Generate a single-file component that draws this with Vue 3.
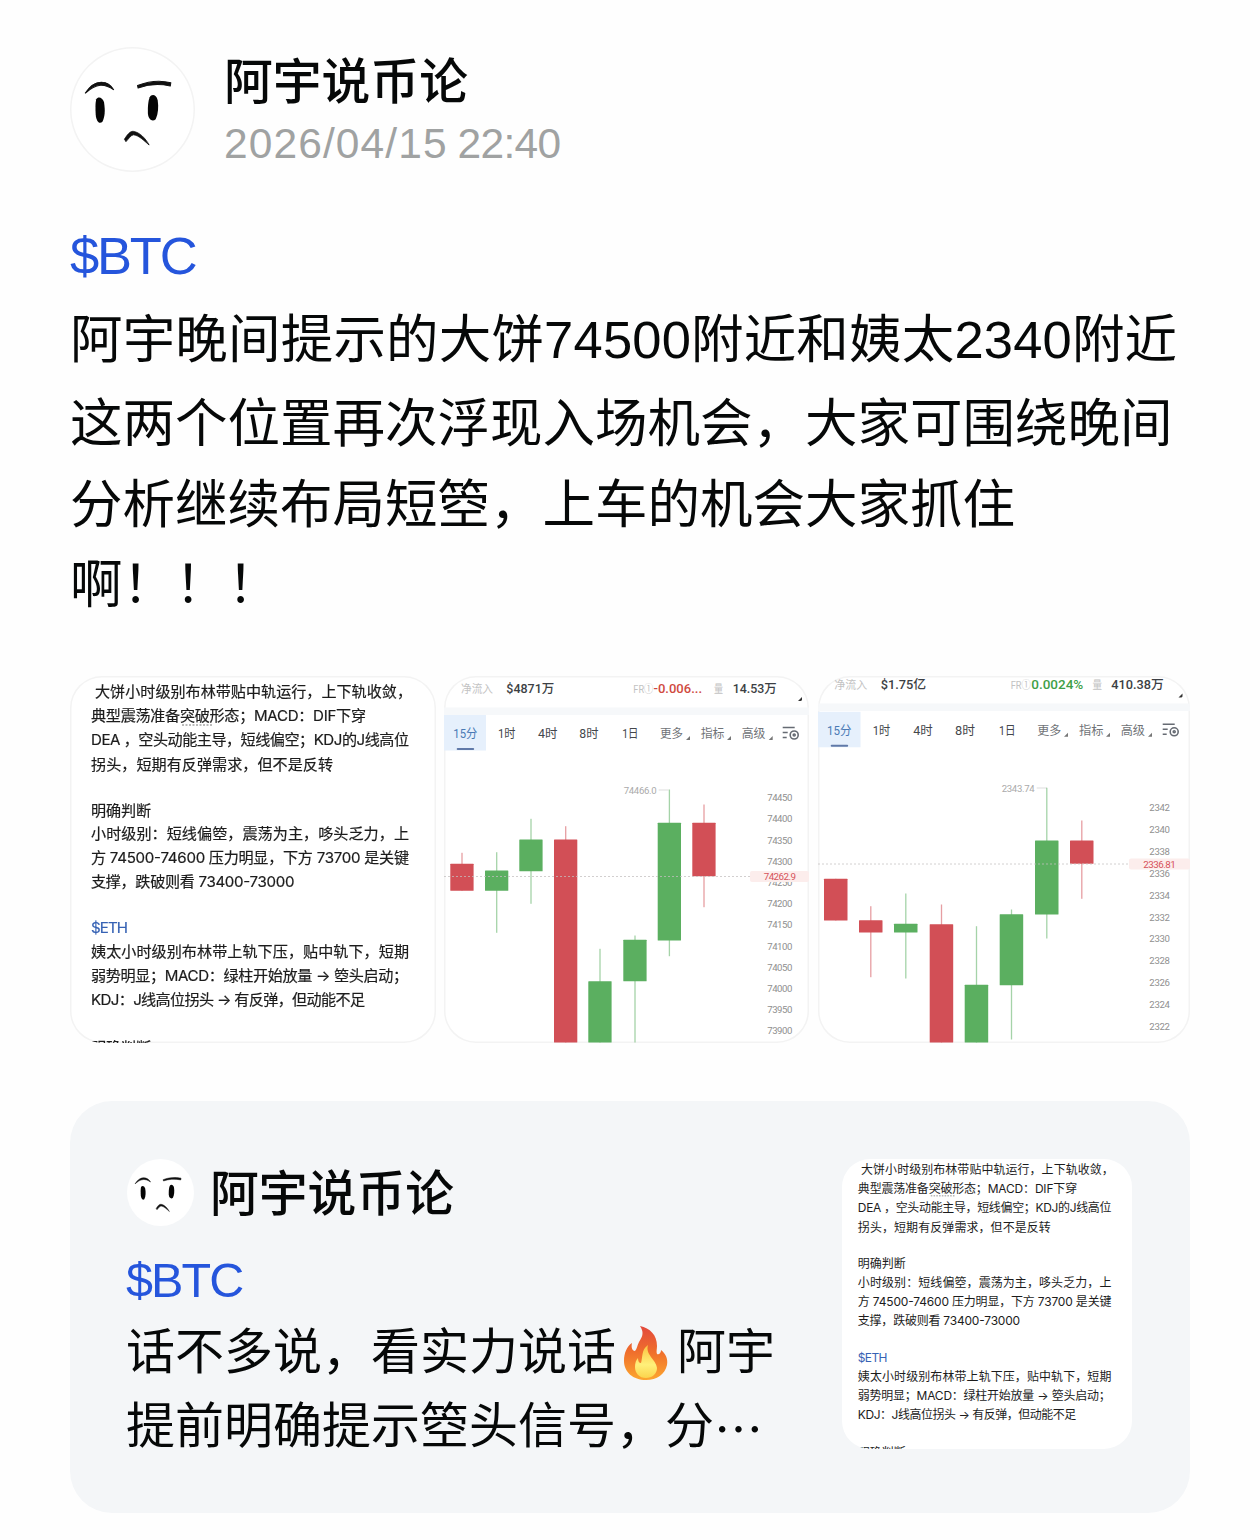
<script setup>
const postLines = [
  '阿宇晚间提示的大饼74500附近和姨太2340附近',
  '这两个位置再次浮现入场机会，大家可围绕晚间',
  '分析继续布局短箜，上车的机会大家抓住',
  '啊！！！'
]

// x, y: text centre line, w: drawn length
const noteLines = [
  { x: 25, y: 15.5, w: 317, text: '大饼小时级别布林带贴中轨运行，上下轨收敛，' },
  { x: 21, y: 39.5, w: 275, text: '典型震荡准备突破形态；MACD：DIF下穿' },
  { x: 21, y: 63.7, w: 318, text: 'DEA ，空头动能主导，短线偏空；KDJ的J线高位' },
  { x: 21, y: 88, w: 242, text: '拐头，短期有反弹需求，但不是反转' },
  { x: 21, y: 134, w: 60, text: '明确判断' },
  { x: 21, y: 157.5, w: 318, text: '小时级别：短线偏箜，震荡为主，哆头乏力，上' },
  { x: 21, y: 181.3, w: 318, text: '方 74500-74600 压力明显，下方 73700 是关键' },
  { x: 21, y: 205.3, w: 203.5, text: '支撑，跌破则看 73400-73000' },
  { x: 21, y: 251.5, w: 37, text: '$ETH', link: true },
  { x: 21, y: 275.5, w: 318, text: '姨太小时级别布林带上轨下压，贴中轨下，短期' },
  { x: 21, y: 299.5, w: 317, text: '弱势明显；MACD：绿柱开始放量 → 箜头启动；' },
  { x: 21, y: 323.5, w: 274, text: 'KDJ：J线高位拐头 → 有反弹，但动能不足' },
  { x: 21, y: 371.5, w: 60, text: '明确判断' }
]

const charts = [
  {
    id: 'btc',
    width: 365,
    headY: 11.3,
    stats: [
      { x: 17, w: 32, text: '净流入', type: 'muted' },
      { x: 62.3, w: 48, text: '$4871万', type: 'strong' },
      { x: 189.3, w: 20, text: 'FR①', type: 'muted' },
      { x: 209.5, w: 48.5, text: '-0.006...', type: 'loss' },
      { x: 270, w: 9, text: '量', type: 'muted' },
      { x: 288.7, w: 44, text: '14.53万', type: 'strong' }
    ],
    corner: [354, 24.5],
    bandY: 31,
    tabY: 38.5,
    tabW: 42,
    tabs: [
      { x: 9.3, w: 24, text: '15分', active: true },
      { x: 54, w: 17.5, text: '1时' },
      { x: 94, w: 19.5, text: '4时' },
      { x: 135.3, w: 19.2, text: '8时' },
      { x: 178.3, w: 16.2, text: '1日' },
      { x: 216, w: 23, text: '更多', more: 242 },
      { x: 256.7, w: 23.8, text: '指标', more: 283 },
      { x: 297.7, w: 23.8, text: '高级', more: 324.7 }
    ],
    iconX: 338.7,
    high: { x: 179.7, w: 33, y: 114, text: '74466.0', to: 224.5 },
    axis: { x: 323.3, w: 25, y: 121, step: 21.2, from: 74450, by: -50, count: 12 },
    price: { x: 319.7, w: 32.3, y: 200, text: '74262.9', pill: 306 },
    candleW: 23.3,
    candles: [
      { x: 6.3, top: 187.3, bottom: 214.3, high: 176.3, low: 214.3, up: false },
      { x: 41, top: 194, bottom: 214.3, high: 175.7, low: 256.3, up: true },
      { x: 75.3, top: 163, bottom: 194.7, high: 142.3, low: 227.3, up: true },
      { x: 110, top: 163, bottom: 366, high: 149.7, low: 366, up: false },
      { x: 144.3, top: 304.7, bottom: 366, high: 272.3, low: 366, up: true },
      { x: 179.3, top: 263.3, bottom: 304.7, high: 259, low: 366, up: true },
      { x: 213.7, top: 146.3, bottom: 264, high: 113, low: 279.7, up: true },
      { x: 248.3, top: 146.3, bottom: 199.7, high: 128, low: 230.7, up: false }
    ]
  },
  {
    id: 'eth',
    width: 372,
    headY: 7.3,
    stats: [
      { x: 16.3, w: 33, text: '净流入', type: 'muted' },
      { x: 62.7, w: 45.5, text: '$1.75亿', type: 'strong' },
      { x: 192.7, w: 20, text: 'FR①', type: 'muted' },
      { x: 213.3, w: 52, text: '0.0024%', type: 'gain' },
      { x: 274.5, w: 9.5, text: '量', type: 'muted' },
      { x: 293.3, w: 52.5, text: '410.38万', type: 'strong' }
    ],
    corner: [360.5, 21],
    bandY: 27,
    tabY: 35.3,
    tabW: 42.5,
    tabs: [
      { x: 9, w: 24.5, text: '15分', active: true },
      { x: 54.7, w: 17.5, text: '1时' },
      { x: 95.3, w: 19.5, text: '4时' },
      { x: 137, w: 20, text: '8时' },
      { x: 181, w: 16.5, text: '1日' },
      { x: 219.3, w: 24, text: '更多', more: 246 },
      { x: 261, w: 24.5, text: '指标', more: 288 },
      { x: 302.7, w: 24.3, text: '高级', more: 330 }
    ],
    iconX: 344.7,
    high: { x: 183.7, w: 33, y: 112, text: '2343.74', to: 229 },
    axis: { x: 331.3, w: 20.7, y: 131.3, step: 21.83, from: 2342, by: -2, count: 11 },
    price: { x: 325.3, w: 32.4, y: 187.5, text: '2336.81', pill: 311 },
    candleW: 23.5,
    candles: [
      { x: 6, top: 202.3, bottom: 244, high: 202.3, low: 244, up: false },
      { x: 41, top: 243.7, bottom: 256, high: 229.7, low: 300.7, up: false },
      { x: 76, top: 247.3, bottom: 256, high: 217, low: 302, up: true },
      { x: 111.7, top: 247.7, bottom: 366, high: 228, low: 366, up: false },
      { x: 146.7, top: 308.3, bottom: 366, high: 249.7, low: 366, up: true },
      { x: 181.7, top: 237.7, bottom: 308.7, high: 233, low: 363, up: true },
      { x: 217, top: 164, bottom: 238, high: 111.3, low: 262, up: true },
      { x: 252, top: 164, bottom: 187.3, high: 144, low: 222.3, up: false }
    ]
  }
]
</script>

<template>
  <main class="post" lang="zh-CN">
    <svg class="defs" width="0" height="0" aria-hidden="true">
      <symbol id="face" viewBox="0 0 124 124">
        <g transform="matrix(1 0 0 .968 0 -.5)">
          <path d="M15 48C20 40 25 36.500 31 36.500C37 36.500 41 40 43.500 44.500C38 40.500 34 39.500 30 39.800C24 40.300 20 43.500 15 48Z" fill="#111" stroke="#111" stroke-width="1" />
          <path d="M67 40C77 36 90 34.500 100 37.200L99.500 40.500C89 38 77 39 67.500 42.500Z" fill="#111" stroke="#111" stroke-width="1" />
          <path d="M26 54C28 51 32 52 33.700 57C35 65 34.800 72 32 77.500C28.500 80 26 76 25.500 70C25.200 64 25 58 26 54Z" fill="#050505" />
          <path d="M79 52C81 48.500 85.500 49 87 55C88 62 87.500 69 85 74.500C82 77.500 78 75.500 77.300 69C77 62 77.500 56 79 52Z" fill="#050505" />
          <path d="M54 95C57 90 60 86.500 63 87C69 88 75 94 78.500 101C73 96 68 91 63 90.500C60 91 58 95 55.500 97.500Z" fill="#111" stroke="#111" stroke-width=".8" />
        </g>
      </symbol>
    </svg>

    <header class="author">
      <svg class="avatar"><use href="#face" /></svg>
      <div class="author-info">
        <h1 class="name">阿宇说币论</h1>
        <time class="date"><span class="day">2026/04/15</span> <span class="clock">22:40</span></time>
      </div>
    </header>

    <section class="content">
      <a class="ticker">$BTC</a>
      <p v-for="line in postLines" :key="line" class="post-line">{{ line }}</p>
    </section>

    <section class="gallery">
      <div class="shot note-shot">
        <svg class="note" viewBox="0 0 366 366">
          <text
            v-for="(line, i) in noteLines"
            :key="i"
            :x="line.x"
            :y="line.y + 5"
            :textLength="line.w"
            :class="{ link: line.link }"
          >{{ line.text }}</text>
          <path d="M112 48.500H142" stroke="#777" stroke-dasharray="2 1.500" />
        </svg>
      </div>

      <div v-for="chart in charts" :key="chart.id" class="shot" :class="chart.id">
        <svg class="chart" :viewBox="`0 0 ${chart.width} 366`">
          <text
            v-for="stat in chart.stats"
            :key="stat.text"
            :x="stat.x"
            :y="chart.headY + 5"
            :textLength="stat.w"
            lengthAdjust="spacingAndGlyphs"
            :class="['stat', stat.type]"
          >{{ stat.text }}</text>
          <path :d="`M${chart.corner[0]} ${chart.corner[1]}l4 -4v3l-1 1z`" fill="#333" />

          <rect x="0" :y="chart.bandY" :width="chart.width" height="7.500" fill="#f6f8fa" />
          <rect x="0" :y="chart.tabY" :width="chart.tabW" height="35.500" fill="#e6f0fc" />
          <rect x="12.700" :y="chart.tabY + 33" width="17.500" height="2" rx="1" fill="#6079a8" />
          <template v-for="tab in chart.tabs" :key="tab.text">
            <text
              :x="tab.x"
              :y="chart.tabY + 23.3"
              :textLength="tab.w"
              lengthAdjust="spacingAndGlyphs"
              :class="['tab', { active: tab.active, menu: tab.more }]"
            >{{ tab.text }}</text>
            <path v-if="tab.more" :d="`M${tab.more} ${chart.tabY + 25}l4 -4v4z`" fill="#777" />
          </template>
          <g :transform="`translate(${chart.iconX} ${chart.tabY + 11.5})`" fill="none" stroke="#666b73" stroke-width="1.600">
            <path d="M0 1H12M0 6H5M0 11H4" />
            <circle cx="11.500" cy="8.500" r="4" />
            <circle cx="11.500" cy="8.500" r="1" />
          </g>

          <text :x="chart.high.x" :y="chart.high.y + 3.6" :textLength="chart.high.w" class="high">{{ chart.high.text }}</text>
          <path :d="`M${chart.high.x + chart.high.w + 2} ${chart.high.y - 0.5}H${chart.high.to}`" stroke="#ddd" />

          <g v-for="(candle, i) in chart.candles" :key="i" :class="candle.up ? 'up' : 'down'">
            <rect class="wick" :x="candle.x + chart.candleW / 2 - 0.6" :y="candle.high" width="1.300" :height="candle.low - candle.high" />
            <rect :x="candle.x" :y="candle.top" :width="chart.candleW" :height="candle.bottom - candle.top" rx=".5" />
          </g>
          <path :d="`M0 ${chart.price.y}H${chart.price.pill}`" stroke="#c4c0c0" stroke-dasharray="2 2" opacity=".75" />

          <text
            v-for="n in chart.axis.count"
            :key="n"
            :x="chart.axis.x"
            :y="chart.axis.y + (n - 1) * chart.axis.step + 3.6"
            :textLength="chart.axis.w"
            class="axis"
          >{{ chart.axis.from + (n - 1) * chart.axis.by }}</text>
          <rect :x="chart.price.pill" :y="chart.price.y - 5.5" :width="chart.width - chart.price.pill" height="11" rx="2" fill="#fcedec" />
          <text :x="chart.price.x" :y="chart.price.y + 3.8" :textLength="chart.price.w" class="price">{{ chart.price.text }}</text>
        </svg>
      </div>
    </section>

    <section class="quote">
      <div class="quote-body">
        <div class="quote-author">
          <svg class="avatar small"><use href="#face" /></svg>
          <h2 class="name">阿宇说币论</h2>
        </div>
        <a class="ticker">$BTC</a>
        <p class="quote-line">
          <span>话不多说，看实力说话</span>
          <svg class="fire" viewBox="0 0 44 54">
            <defs>
              <linearGradient id="flame" x1="0" y1="0" x2="0" y2="1">
                <stop offset="0" stop-color="#e2483c" />
                <stop offset=".5" stop-color="#f0702c" />
                <stop offset="1" stop-color="#fca62f" />
              </linearGradient>
              <linearGradient id="core" x1="0" y1="0" x2="0" y2="1">
                <stop offset="0" stop-color="#fbc240" />
                <stop offset=".6" stop-color="#fff07a" />
                <stop offset="1" stop-color="#fbd44c" />
              </linearGradient>
            </defs>
            <path d="M16 0C26 2 33 9 33 20C33 23 32 26 33 28C35 29 37 27 37 24C42 28 44 33 43 39C41 48 33 54 22 54C9 54 0 46 0 35C0 27 3 20 8 17C7 21 8 25 11 25C13 23 13 20 15 16C19 10 20 6 16 0Z" fill="url(#flame)" />
            <path d="M24 19C21 29 32 33 33 42C33 48 28 52 22 52C15 52 11 47 11 41C11 37 12 34 14 32C14 35 15 37 17 37C19 31 17 24 24 19Z" fill="url(#core)" />
          </svg>
          <span>阿宇</span>
        </p>
        <p class="quote-line">提前明确提示箜头信号，分<span class="dots">…</span></p>
      </div>
      <div class="thumb">
        <svg class="note" viewBox="0 0 366 366">
          <text
            v-for="(line, i) in noteLines"
            :key="i"
            :x="line.x - 1"
            :y="line.y * 1.003 + 3.5"
            :textLength="line.w + 2 * line.w / 317"
            :class="{ link: line.link }"
          >{{ line.text }}</text>
          <path d="M112 46.500H142" stroke="#777" stroke-dasharray="2 1.500" />
        </svg>
      </div>
    </section>
  </main>
</template>

<style>
body {
  margin: 0;
  background: #fefefe;
}
</style>

<style scoped>
.post {
  box-sizing: border-box;
  width: 1260px;
  height: 1540px;
  padding: 47px 70px 0;
  overflow: hidden;
  background: #fefefe;
  color: #060808;
  font-family: 'Liberation Sans', 'Noto Sans CJK SC', sans-serif;
}

.defs {
  display: block;
}

.author {
  display: flex;
  gap: 29px;
  height: 125px;
}

.avatar {
  width: 125px;
  height: 125px;
  flex: none;
  border-radius: 50%;
  background: #fff;
  box-shadow: inset 0 0 0 1.5px #f3f3f3;
}

.author-info {
  display: flex;
  flex-direction: column;
}

.name {
  margin: 0;
  font-size: 48.8px;
  font-weight: 500;
  line-height: 70px;
  white-space: nowrap;
}

.date {
  color: #a0a2a2;
  font-size: 42.5px;
  line-height: 54px;
  word-spacing: -2px;
}

.day {
  letter-spacing: 1.1px;
}

.clock {
  letter-spacing: -0.7px;
}

.content {
  margin-top: 43px;
  height: 461px;
}

.ticker {
  display: block;
  height: 82px;
  color: #2555dc;
  font-size: 52.5px;
  line-height: 82px;
  letter-spacing: -2.2px;
}

.post-line {
  margin: 0;
  height: 80.500px;
  font-size: 52.5px;
  line-height: 86px;
  white-space: nowrap;
}

.post-line:nth-of-type(1) {
  height: 84px;
  letter-spacing: 0.18px;
}

.gallery {
  display: flex;
  gap: 9px;
}

.shot {
  box-sizing: border-box;
  width: 365px;
  height: 367px;
  flex: none;
  overflow: hidden;
  border-radius: 32px;
  background: #fff;
  box-shadow: inset 0 0 0 1.5px #f3f3f3;
}

.note-shot {
  width: 366px;
}

.btc {
  margin-left: -1px;
}

.eth {
  width: 372px;
}

.note,
.chart {
  display: block;
  width: 100%;
  height: 100%;
}

.note text {
  fill: #1c1c1c;
  font-family: Inter, 'Noto Sans CJK SC', sans-serif;
  font-size: 15.1px;
}

.note .link {
  fill: #3662b4;
}

.note-shot .note {
  filter: blur(0.6px);
}

.note-shot .note text {
  stroke: #1c1c1c;
  stroke-width: 0.2px;
}

.note-shot .note .link {
  stroke: #3662b4;
}

.chart text {
  font-family: Roboto, 'Noto Sans CJK SC', sans-serif;
}

.chart .stat {
  font-size: 12.5px;
}

.chart .muted {
  fill: #c2c2c2;
  font-size: 11px;
}

.chart .strong {
  fill: #3c3f44;
  font-weight: 500;
}

.chart .loss {
  fill: #d04a3f;
  font-weight: 500;
}

.chart .gain {
  fill: #3f9f48;
  font-weight: 500;
}

.chart .tab {
  fill: #44474c;
  font-size: 12.5px;
}

.chart .menu {
  fill: #707377;
}

.chart .active {
  fill: #4a7ab5;
}

.chart .high,
.chart .axis {
  fill: #8f8f8f;
  font-size: 9.6px;
}

.chart .high {
  fill: #aaa;
}

.chart .price {
  fill: #d6525a;
  font-size: 9.8px;
}

.up {
  fill: #5baf60;
}

.down {
  fill: #d24f56;
}

.wick {
  opacity: 0.55;
}

.quote {
  box-sizing: border-box;
  display: flex;
  justify-content: space-between;
  height: 412px;
  margin-top: 58px;
  padding: 58px 58px 0 56px;
  border-radius: 42px;
  background: #f4f6f8;
}

.quote-author {
  display: flex;
  align-items: center;
  gap: 17px;
  height: 66px;
}

.quote-author .name {
  padding-top: 3px;
}

.avatar.small {
  width: 67px;
  height: 67px;
  margin-left: 1px;
  margin-right: -1px;
  box-shadow: none;
}

.quote .ticker {
  height: 73px;
  margin-top: 18px;
  font-size: 48.5px;
  line-height: 75px;
  letter-spacing: -1.9px;
}

.quote-line {
  display: flex;
  align-items: center;
  height: 73.500px;
  margin: 0;
  font-size: 49px;
  line-height: 73px;
  white-space: nowrap;
}

.fire {
  width: 44px;
  height: 54px;
  margin: 0 9px 0 8px;
}

.dots {
  font-family: 'Noto Sans CJK SC', sans-serif;
}

.thumb {
  width: 290px;
  height: 290px;
  overflow: hidden;
  border-radius: 28px;
  background: #fff;
}
</style>
